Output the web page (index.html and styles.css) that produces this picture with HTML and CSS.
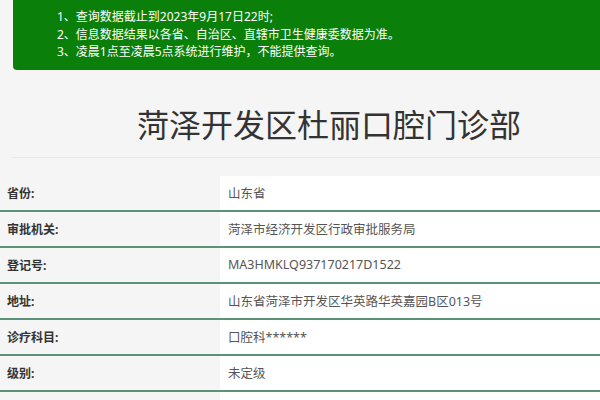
FILE: index.html
```html
<!DOCTYPE html>
<html lang="zh-CN">
<head>
<meta charset="utf-8">
<title>菏泽开发区杜丽口腔门诊部</title>
<link rel="stylesheet" href="styles.css">
</head>
<body>
<div class="page">
  <div class="notice">
    <p>1、查询数据截止到2023年9月17日22时;</p>
    <p>2、信息数据结果以各省、自治区、直辖市卫生健康委数据为准。</p>
    <p>3、凌晨1点至凌晨5点系统进行维护，不能提供查询。</p>
  </div>
  <div class="title-wrap">
    <h1 class="title">菏泽开发区杜丽口腔门诊部</h1>
  </div>
  <div class="table">
    <div class="row"><div class="label">省份:</div><div class="value">山东省</div></div>
    <div class="row"><div class="label">审批机关:</div><div class="value">菏泽市经济开发区行政审批服务局</div></div>
    <div class="row"><div class="label">登记号:</div><div class="value">MA3HMKLQ937170217D1522</div></div>
    <div class="row"><div class="label">地址:</div><div class="value">山东省菏泽市开发区华英路华英嘉园B区013号</div></div>
    <div class="row"><div class="label">诊疗科目:</div><div class="value">口腔科******</div></div>
    <div class="row"><div class="label">级别:</div><div class="value">未定级</div></div>
    <div class="row row-empty"><div class="label"></div><div class="value"></div></div>
  </div>
</div>
</body>
</html>
```
FILE: styles.css
```css
html, body {
  margin: 0;
  padding: 0;
  background: #f5f5f5;
  overflow: hidden;
}
body {
  font-family: "Noto Sans", "Noto Sans CJK SC", sans-serif;
  color: #333;
}
.page {
  width: 600px;
  height: 400px;
  overflow: hidden;
}
.notice {
  margin-left: 13px;
  width: 620px;
  background: #0a800a;
  color: #fff;
  border-radius: 0 0 4px 4px;
  padding: 8px 0 9px 44px;
  font-size: 12px;
  line-height: 17.5px;
}
.notice p {
  margin: 0;
}
.title-wrap {
  margin-left: 12px;
  width: 634px;
  padding-top: 35px;
  padding-bottom: 12px;
  border-bottom: 1px solid #e8e8e8;
  margin-bottom: 18px;
}
.title {
  margin: 0;
  text-align: center;
  font-size: 32px;
  line-height: 40px;
  font-weight: normal;
  color: #333;
}
.table {
  display: flex;
  flex-direction: column;
}
.row {
  display: flex;
  height: 34px;
  border-bottom: 2px solid #5a9275;
}
.label {
  width: 213px;
  padding-left: 7px;
  display: flex;
  align-items: center;
  font-size: 12px;
  font-weight: bold;
  color: #333;
}
.value {
  flex: 1;
  background: #fff;
  padding-left: 8px;
  display: flex;
  align-items: center;
  font-size: 12.5px;
  color: #555;
}
```
